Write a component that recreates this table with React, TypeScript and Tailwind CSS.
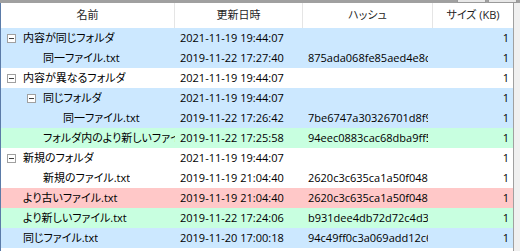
import React from 'react';

type Row = {
  name: string;
  level: number;
  folder?: boolean;
  date: string;
  hash?: string;
  size: string;
  tone: 'blue' | 'white' | 'green' | 'red';
};

const rows: Row[] = [
  { name: '内容が同じフォルダ', level: 0, folder: true, date: '2021-11-19 19:44:07', size: '1', tone: 'blue' },
  { name: '同一ファイル.txt', level: 1, date: '2019-11-22 17:27:40', hash: '875ada068fe85aed4e8c9f1a2b3c4d5e', size: '1', tone: 'blue' },
  { name: '内容が異なるフォルダ', level: 0, folder: true, date: '2021-11-19 19:44:07', size: '1', tone: 'white' },
  { name: '同じフォルダ', level: 1, folder: true, date: '2021-11-19 19:44:07', size: '1', tone: 'blue' },
  { name: '同一ファイル.txt', level: 2, date: '2019-11-22 17:26:42', hash: '7be6747a30326701d8f98a1b2c3d4e5f', size: '1', tone: 'blue' },
  { name: 'フォルダ内のより新しいファイル.txt', level: 1, date: '2019-11-22 17:25:58', hash: '94eec0883cac68dba9ff5a1b2c3d4e5f', size: '1', tone: 'green' },
  { name: '新規のフォルダ', level: 0, folder: true, date: '2021-11-19 19:44:07', size: '1', tone: 'white' },
  { name: '新規のファイル.txt', level: 1, date: '2019-11-19 21:04:40', hash: '2620c3c635ca1a50f0480a1b2c3d4e5f', size: '1', tone: 'white' },
  { name: 'より古いファイル.txt', level: 0, date: '2019-11-19 21:04:40', hash: '2620c3c635ca1a50f0480a1b2c3d4e5f', size: '1', tone: 'red' },
  { name: 'より新しいファイル.txt', level: 0, date: '2019-11-22 17:24:06', hash: 'b931dee4db72d72c4d3ea1b2c3d4e5f', size: '1', tone: 'green' },
  { name: '同じファイル.txt', level: 0, date: '2019-11-20 17:00:18', hash: '94c49ff0c3a069add12c6a1b2c3d4e5f', size: '1', tone: 'blue' },
];

const toneClass: Record<Row['tone'], string> = {
  blue: 'bg-[#cce8ff]',
  white: 'bg-white',
  green: 'bg-[#c8ffe0]',
  red: 'bg-[#ffc8c8]',
};

// folder rows start with the expander box, files start where folder text would be
const folderIndent = ['pl-[6px]', 'pl-[26px]', 'pl-[46px]'];
const fileIndent = ['pl-[22px]', 'pl-[42px]', 'pl-[62px]'];

function Expander() {
  return (
    <span className="w-[9px] h-[9px] mr-[7px] shrink-0 border border-[#a0a0a0] bg-white flex items-center justify-center">
      <span className="w-[5px] h-px bg-[#404040]" />
    </span>
  );
}

const cols = 'grid grid-cols-[174px_128px_130px_80px]';

export default function App() {
  return (
    <div className="w-[520px] h-[251px] overflow-hidden bg-white flex flex-col text-[11px] text-black font-['Open_Sans','Noto_Sans_CJK_JP',sans-serif] [font-feature-settings:'palt']">
      <div className="h-[3px] shrink-0 bg-[#a0a0a0] flex justify-end gap-[2px] pr-[3px]">
        <div className="w-[29px] h-[3px] bg-[#e8e8e8] border-x border-b border-[#9a9a9a]" />
        <div className="w-[29px] h-[3px] bg-[#e8e8e8] border-x border-b border-[#9a9a9a]" />
      </div>
      <div className="flex flex-1 min-h-0">
        <div className="w-px shrink-0 bg-[#5b7ba8]" />
        <div className="flex flex-col">
          <div className={`${cols} h-[25px] text-[#1e1e1e]`}>
            <div className="flex items-center justify-center border-r border-[#e5e5e5]">名前</div>
            <div className="flex items-center justify-center border-r border-[#e5e5e5]">更新日時</div>
            <div className="flex items-center justify-center border-r border-[#e5e5e5]">ハッシュ</div>
            <div className="flex items-center justify-center">サイズ (KB)</div>
          </div>
          {rows.map((row, i) => (
            <div key={i} className={`${cols} h-5 ${toneClass[row.tone]}`}>
              <div
                className={`flex items-center min-w-0 overflow-hidden whitespace-nowrap ${
                  row.folder ? folderIndent[row.level] : fileIndent[row.level]
                }`}
              >
                {row.folder && <Expander />}
                <span className="min-w-0 overflow-hidden">{row.name}</span>
              </div>
              <div className="flex items-center min-w-0 pl-[5px] whitespace-nowrap overflow-hidden">{row.date}</div>
              <div className="flex items-center min-w-0 overflow-hidden pl-[5px] pr-[5px]">
                <span className="min-w-0 overflow-hidden whitespace-nowrap">{row.hash}</span>
              </div>
              <div className="flex items-center justify-end pr-[4px]">{row.size}</div>
            </div>
          ))}
        </div>
        <div className="w-[7px] shrink-0 bg-[#f0f0f0] border-l border-[#a0a0a0]" />
      </div>
    </div>
  );
}
